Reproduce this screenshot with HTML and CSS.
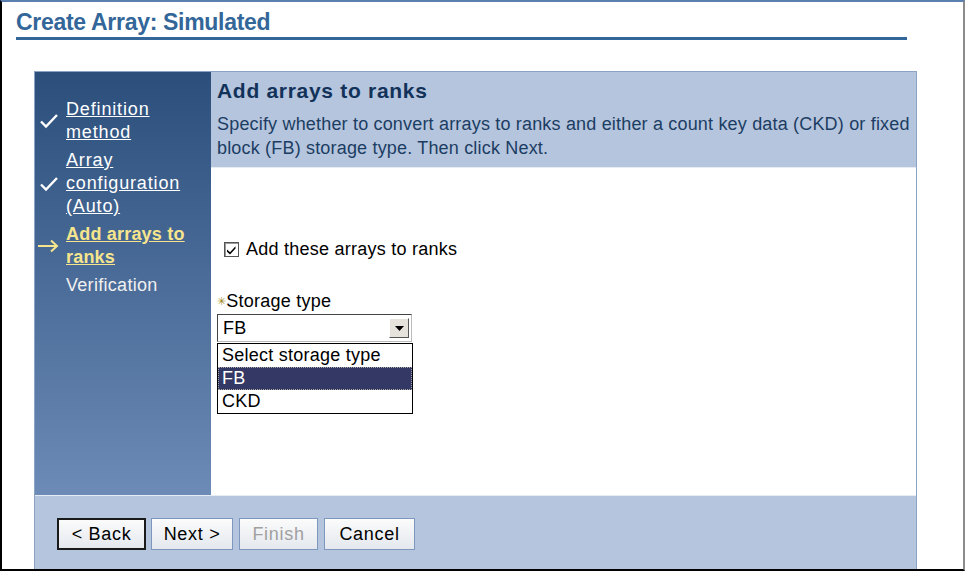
FILE: index.html
```html
<!DOCTYPE html>
<html>
<head>
<meta charset="utf-8">
<link rel="stylesheet" href="styles.css">
</head>
<body>
<div class="frame">
  <h1 class="page-title">Create Array: Simulated</h1>
  <div class="wizard">
    <nav class="steps">
      <div class="step done">
        <span class="mark"><svg width="20" height="16" viewBox="0 0 20 16"><path d="M2 8.5 L7 13.5 L18 2" fill="none" stroke="#fff" stroke-width="2.4"/></svg></span>
        <a class="link">Definition method</a>
      </div>
      <div class="step done">
        <span class="mark"><svg width="20" height="16" viewBox="0 0 20 16"><path d="M2 8.5 L7 13.5 L18 2" fill="none" stroke="#fff" stroke-width="2.4"/></svg></span>
        <a class="link">Array configuration (Auto)</a>
      </div>
      <div class="step current">
        <span class="mark arrow"><svg width="22" height="14" viewBox="0 0 22 14"><path d="M1 7 H20 M14 1.5 L20 7 L14 12.5" fill="none" stroke="#f6e58d" stroke-width="2"/></svg></span>
        <a class="link">Add arrays to ranks</a>
      </div>
      <div class="step pending">
        <span class="mark"></span>
        <span>Verification</span>
      </div>
    </nav>
    <header class="head">
      <h2 class="head-title">Add arrays to ranks</h2>
      <p class="head-desc">Specify whether to convert arrays to ranks and either a count key data (CKD) or fixed block (FB) storage type. Then click Next.</p>
    </header>
    <main class="content">
      <label class="check-row">
        <span class="checkbox"><svg width="11" height="10" viewBox="0 0 11 10"><path d="M1 4.5 L4 7.3 L9.5 1.2 L9.5 3.6 L4 9.5 L1 6.7 Z" fill="#000"/></svg></span>
        <span>Add these arrays to ranks</span>
      </label>
      <div class="field">
        <div class="field-label"><span class="req">&#10035;</span>Storage type</div>
        <div class="select">
          <span class="select-value">FB</span>
          <span class="select-btn"><svg width="9" height="5" viewBox="0 0 9 5"><path d="M0 0 H9 L4.5 5 Z" fill="#000"/></svg></span>
        </div>
        <ul class="options">
          <li>Select storage type</li>
          <li class="selected">FB</li>
          <li>CKD</li>
        </ul>
      </div>
    </main>
    <footer class="foot">
      <button class="btn focused">&lt; Back</button>
      <button class="btn">Next &gt;</button>
      <button class="btn disabled">Finish</button>
      <button class="btn">Cancel</button>
    </footer>
  </div>
</div>
</body>
</html>
```
FILE: styles.css
```css
html, body {
  margin: 0;
  padding: 0;
  background: #fff;
}
body {
  font-family: "Liberation Sans", Arial, sans-serif;
}
.frame {
  width: 965px;
  height: 571px;
  box-sizing: border-box;
  border-top: 2px solid #5b7fae;
  border-left: 2px solid #000;
  border-right: 2px solid #8c8c8c;
  border-bottom: 2px solid #000;
  padding: 0 0 0 14px;
  overflow: hidden;
}
.page-title {
  margin: 7px 0 0 0;
  width: 891px;
  font-size: 23px;
  line-height: 26px;
  font-weight: bold;
  color: #336699;
  padding-bottom: 2px;
  border-bottom: 3px solid #336699;
  letter-spacing: -0.3px;
}
.wizard {
  margin: 31px 0 0 18px;
  width: 883px;
  height: 498px;
  box-sizing: border-box;
  border: 1px solid #8da3c3;
  border-bottom: 0;
  display: grid;
  grid-template-columns: 176px 1fr;
  grid-template-rows: 96px 327px 1fr;
}
.steps {
  grid-row: 1 / 3;
  grid-column: 1;
  background: linear-gradient(#2b4e7b, #6c8bb6);
  padding-top: 26px;
  display: flex;
  flex-direction: column;
  gap: 5px;
  font-size: 18px;
  line-height: 23px;
  letter-spacing: 0.85px;
  color: #fff;
}
.step {
  display: flex;
  align-items: center;
}
.mark {
  width: 31px;
  flex: none;
  padding-left: 4px;
  box-sizing: border-box;
  display: flex;
  align-items: center;
}
.mark.arrow {
  padding-left: 2px;
}
.link {
  text-decoration: underline;
  color: #fff;
  width: 140px;
}
.step.current .link {
  color: #f6e58d;
  font-weight: bold;
  letter-spacing: 0.2px;
}
.step.pending {
  color: #f0f0f0;
  letter-spacing: 0.3px;
}
.head {
  grid-row: 1;
  grid-column: 2;
  background: #b5c5dd;
  padding: 6px 0 0 6px;
  color: #1c3d63;
  border-bottom: 1px solid #e6ecf4;
}
.head-title {
  margin: 0;
  font-size: 21px;
  line-height: 26px;
  color: #12325a;
  letter-spacing: 0.7px;
}
.head-desc {
  margin: 8px 0 0 0;
  font-size: 18px;
  line-height: 24px;
  letter-spacing: 0.18px;
}
.content {
  grid-row: 2;
  grid-column: 2;
  background: #fff;
  padding: 71px 0 0 6px;
  font-size: 18px;
  letter-spacing: 0.25px;
  color: #000;
}
.check-row {
  display: flex;
  align-items: center;
  gap: 7px;
  padding-left: 7px;
}
.checkbox {
  width: 13px;
  height: 13px;
  border: 1px solid #555;
  box-shadow: inset 1px 1px 0 #999;
  display: flex;
  align-items: center;
  justify-content: center;
  background: #fff;
}
.field {
  margin-top: 31px;
}
.field-label {
  line-height: 20px;
}
.req {
  color: #a08a1a;
  font-size: 11px;
  vertical-align: 2px;
}
.select {
  margin-top: 3px;
  width: 195px;
  height: 28px;
  box-sizing: border-box;
  border: 1px solid #444;
  border-right-color: #bbb;
  border-bottom-color: #bbb;
  display: flex;
  align-items: center;
  justify-content: space-between;
  padding-left: 5px;
  padding-right: 2px;
}
.select-btn {
  width: 20px;
  height: 20px;
  box-sizing: border-box;
  background: #e6e3dc;
  border: 1px solid;
  border-color: #fff #555 #555 #fff;
  display: flex;
  align-items: center;
  justify-content: center;
}
.options {
  list-style: none;
  margin: 1px 0 0 0;
  padding: 0;
  width: 196px;
  box-sizing: border-box;
  border: 1px solid #000;
  line-height: 23px;
}
.options li {
  padding-left: 4px;
  height: 23px;
}
.options li.selected {
  background: #333864;
  color: #fff;
  outline: 1px dotted #aaa;
  outline-offset: -1px;
}
.foot {
  grid-row: 3;
  grid-column: 1 / 3;
  background: #b5c5dd;
  border-top: 1px solid #e6ecf4;
  display: flex;
  align-items: flex-start;
  gap: 6px;
  padding: 22px 0 0 22px;
}
.btn {
  font-family: "Liberation Sans", Arial, sans-serif;
  font-size: 18px;
  height: 32px;
  padding: 0;
  background: linear-gradient(#fbfbfb, #e4e8ee);
  border: 1px solid #7d97bf;
  color: #000;
  letter-spacing: 0.7px;
}
.btn.focused {
  border: 2px solid #1a1a1a;
  width: 89px;
}
.btn:nth-child(2) { width: 82px; margin-left: -1px; }
.btn.disabled { color: #a0a0a0; width: 79px; }
.btn:nth-child(4) { width: 91px; }
```
